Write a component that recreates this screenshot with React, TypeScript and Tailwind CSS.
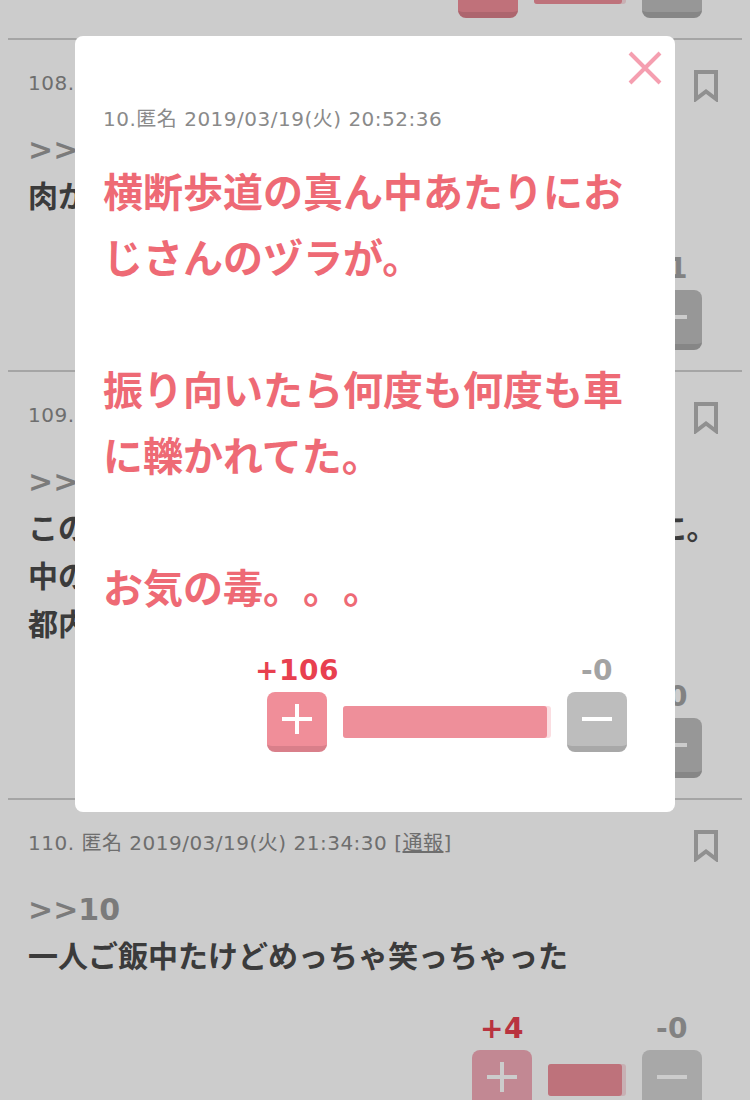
const font = "font-['DejaVu_Sans','Noto_Sans_CJK_JP',sans-serif] [text-spacing-trim:space-all]";

function Bookmark() {
  return (
    <svg width="24" height="32" viewBox="0 0 24 32" fill="none" className="shrink-0">
      <path d="M2 2H22V29L12 21.5L2 29Z" stroke="#b4b4b4" strokeWidth="4" strokeLinejoin="miter" />
    </svg>
  );
}

function PlusGlyph() {
  return (
    <svg width="30" height="30" viewBox="0 0 30 30">
      <path d="M0 15H30M15 0V30" stroke="#fff" strokeWidth="4" />
    </svg>
  );
}

function MinusGlyph() {
  return (
    <svg width="30" height="30" viewBox="0 0 30 30">
      <path d="M0 15H30" stroke="#fff" strokeWidth="4" />
    </svg>
  );
}

type VoteProps = { plus: string; minus: string; barWidth: string; faded?: boolean };

// Vote controls: +count button, ratio bar, -count button
function Vote({ plus, minus, barWidth, faded }: VoteProps) {
  return (
    <div className="flex items-center gap-4">
      <div className="relative w-[60px]">
        <div className="absolute -top-[38px] left-0 right-0 flex justify-center">
          <span className="whitespace-nowrap text-[28px] leading-[34px] font-bold tracking-[0.5px] text-[#e8404f]">{plus}</span>
        </div>
        <div className={`flex h-[60px] w-[60px] items-center justify-center rounded-lg border-b-[6px] ${faded ? "border-[#eda0ad] bg-[#f3abb8]" : "border-[#d97f8a] bg-[#f08e99]"}`}>
          <PlusGlyph />
        </div>
      </div>
      <div className={`h-8 ${barWidth} rounded-[3px] bg-[#fbdde1]`}>
        <div className="h-full w-[calc(100%-4px)] rounded-[3px] bg-[#ee8f9a]" />
      </div>
      <div className="relative w-[60px]">
        <div className="absolute -top-[38px] left-0 right-0 flex justify-center">
          <span className="whitespace-nowrap text-[28px] leading-[34px] font-bold tracking-[0.5px] text-[#a3a3a3]">{minus}</span>
        </div>
        <div className={`flex h-[60px] w-[60px] items-center justify-center rounded-lg border-b-[6px] ${faded ? "border-[#c9c9c9] bg-[#d2d2d2]" : "border-[#a8a8a8] bg-[#bdbdbd]"}`}>
          <MinusGlyph />
        </div>
      </div>
    </div>
  );
}

type PostProps = {
  meta: string;
  anchor: string;
  lines: string[];
  vote: VoteProps;
  report?: boolean;
};

function Post({ meta, anchor, lines, vote, report }: PostProps) {
  return (
    <article className="mx-2 border-b-2 border-[#cfcfcf] px-5 pt-[30px] pb-[20px]">
      <div className="flex items-start justify-between pr-1">
        <p className="text-[20px] leading-[26px] tracking-[0.5px] text-[#8a8a8a]">
          {meta}
          {report && (
            <>
              {" "}
              [<span className="underline">通報</span>]
            </>
          )}
        </p>
        <Bookmark />
      </div>
      <p className="mt-[24px] text-[30px] leading-[47px] font-bold text-[#9a9a9a]">{anchor}</p>
      <div className="text-[30px] leading-[48px] font-bold whitespace-nowrap text-[#4a4a4a]">
        {lines.map((l) => (
          <div key={l}>{l}</div>
        ))}
      </div>
      <div className="mt-[69px] flex justify-end pr-[20px]">
        <Vote {...vote} />
      </div>
    </article>
  );
}

export default function App() {
  return (
    <div className={`relative h-[1100px] w-[750px] overflow-hidden bg-white ${font}`}>
      {/* previous post, scrolled almost out of view */}
      <div className="mx-2 flex h-10 items-end justify-end overflow-hidden border-b-2 border-[#cfcfcf] pr-10 pb-[20px]">
        <Vote plus="+5" minus="-1" barWidth="w-[92px]" />
      </div>

      <Post
        meta="108. 匿名 2019/03/19(火) 21:20:12"
        anchor=">>10"
        lines={["肉かと思って近づいたらびっくりした"]}
        vote={{ plus: "+6", minus: "-1", barWidth: "w-[78px]" }}
      />
      <Post
        meta="109. 匿名 2019/03/19(火) 21:28:47"
        anchor=">>10"
        lines={[
          "このまえ道を通っていたのに見かけなかったのに。",
          "中の人はどんな気持ちで歩いているんだろう..。",
          "都内の話かな",
        ]}
        vote={{ plus: "+3", minus: "-0", barWidth: "w-[78px]" }}
      />
      <Post
        meta="110. 匿名 2019/03/19(火) 21:34:30"
        report
        anchor=">>10"
        lines={["一人ご飯中たけどめっちゃ笑っちゃった"]}
        vote={{ plus: "+4", minus: "-0", barWidth: "w-[78px]", faded: true }}
      />

      {/* dimmed backdrop */}
      <div className="absolute inset-0 bg-black/20" />

      {/* comment dialog */}
      <div className="absolute top-9 left-[75px] h-[776px] w-[600px] rounded-lg bg-white px-7 pt-[70px]">
        <svg width="34" height="34" viewBox="0 0 34 34" className="absolute top-[15px] right-[13px]">
          <path d="M2 2L32 32M32 2L2 32" stroke="#f59fb0" strokeWidth="4" />
        </svg>
        <p className="text-[20px] leading-[26px] tracking-[0.5px] text-[#8a8a8a]">10.匿名 2019/03/19(火) 20:52:36</p>
        <div className="mt-[28px] text-[40px] leading-[66px] font-bold text-[#ee6a75]">
          <p>横断歩道の真ん中あたりにお</p>
          <p>じさんのヅラが。</p>
          <p>&nbsp;</p>
          <p>振り向いたら何度も何度も車</p>
          <p>に轢かれてた。</p>
          <p>&nbsp;</p>
          <p>お気の毒。。。</p>
        </div>
        <div className="mt-[70px] flex justify-end pr-5">
          <Vote plus="+106" minus="-0" barWidth="w-[208px]" />
        </div>
      </div>
    </div>
  );
}
